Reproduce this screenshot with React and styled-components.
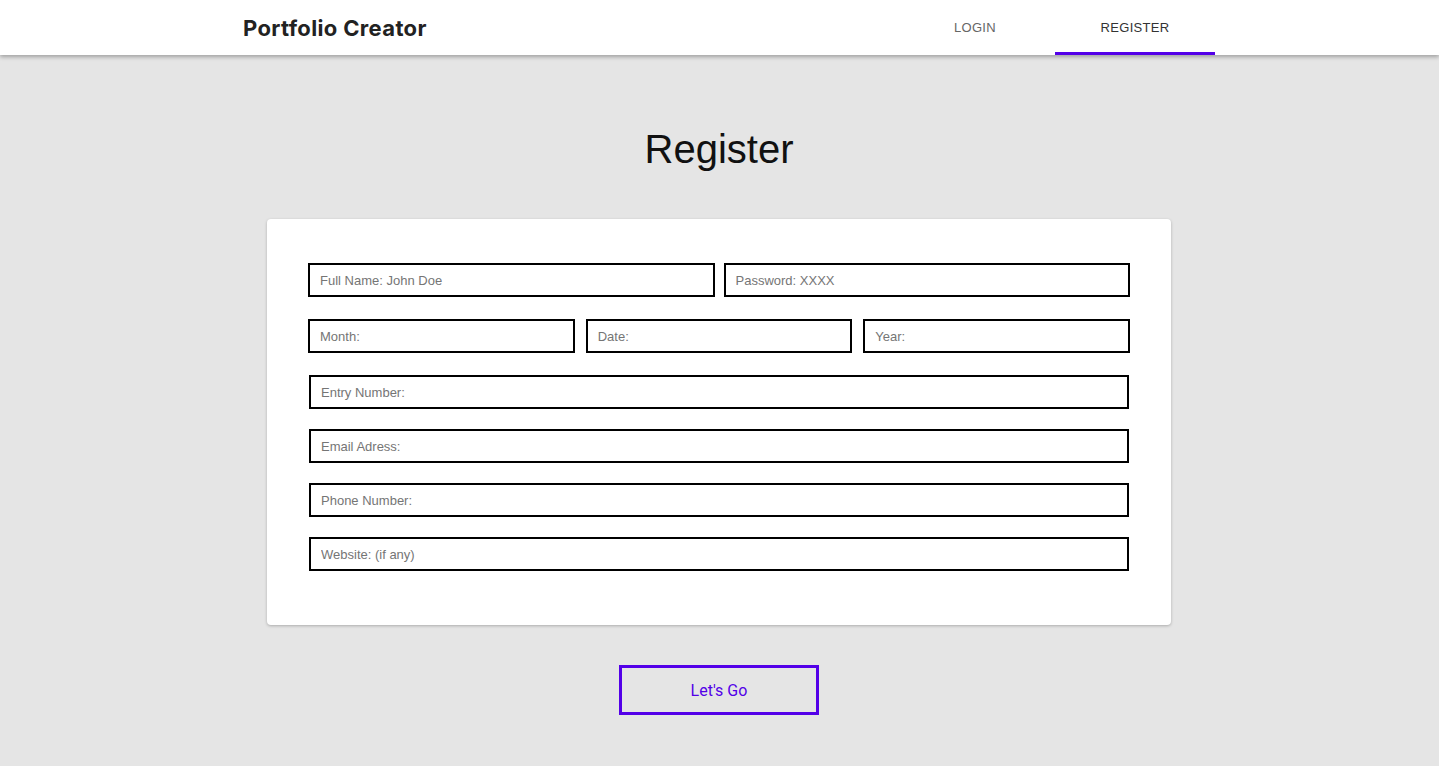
import React from "react";
import styled, { createGlobalStyle } from "styled-components";

const Global = createGlobalStyle`
  html, body { margin: 0; padding: 0; }
  body {
    background: #e5e5e5;
    font-family: "Liberation Sans", Arial, sans-serif;
    min-height: 766px;
  }
`;

const Page = styled.div`
  min-height: 766px;
  background: #e5e5e5;
`;

const Header = styled.header`
  height: 55px;
  background: #fff;
  box-shadow: 0 2px 4px rgba(0, 0, 0, 0.3);
  position: relative;
  z-index: 1;
`;

const HeaderInner = styled.div`
  width: 991px;
  margin: 0 auto;
  padding-left: 19px;
  height: 100%;
  display: flex;
  align-items: center;
  justify-content: space-between;
  box-sizing: border-box;
`;

const Brand = styled.div`
  font-family: Inter, "Liberation Sans", sans-serif;
  font-weight: 700;
  font-size: 22px;
  letter-spacing: 0.35px;
  color: #222;
  padding-top: 1px;
`;

const Tabs = styled.nav`
  display: flex;
  height: 100%;
`;

const Tab = styled.div`
  width: 160px;
  height: 100%;
  display: flex;
  align-items: center;
  justify-content: center;
  box-sizing: border-box;
  padding-top: 3px;
  font-size: 13px;
  letter-spacing: 0.3px;
  color: ${(p) => (p.$active ? "#333" : "#666")};
  border-bottom: 3px solid ${(p) => (p.$active ? "#5300e8" : "transparent")};
`;

const Main = styled.main`
  display: flex;
  flex-direction: column;
  align-items: center;
  padding-top: 71px;
  padding-right: 1px;
`;

const Title = styled.h1`
  margin: 0;
  font-weight: 400;
  font-size: 40px;
  line-height: 46px;
  color: #111;
`;

const Card = styled.form`
  margin-top: 47px;
  width: 904px;
  box-sizing: border-box;
  background: #fff;
  border-radius: 4px;
  box-shadow: 0 1px 3px rgba(0, 0, 0, 0.25);
  padding: 44px 41px 54px 41px;
  display: flex;
  flex-direction: column;
`;

const Row = styled.div`
  display: flex;
  gap: ${(p) => p.$gap || 9}px;
  margin-bottom: ${(p) => p.$mb ?? 22}px;
  padding: ${(p) => (p.$inset ? "0 1px 0 1px" : "0")};
`;

const Field = styled.input`
  flex: 1;
  min-width: 0;
  height: 34px;
  box-sizing: border-box;
  border: 2px solid #000;
  border-radius: 0;
  padding: 1px 10px 0;
  font-family: "Liberation Sans", Arial, sans-serif;
  font-size: 13px;
  color: #333;
  background: #fff;
  outline: none;
  &::placeholder { color: #757575; }
`;

const Button = styled.button`
  margin-top: 40px;
  width: 200px;
  height: 50px;
  box-sizing: border-box;
  background: transparent;
  border: 3px solid #5300e8;
  color: #5300e8;
  font-family: Roboto, "Liberation Sans", sans-serif;
  font-size: 16px;
  cursor: pointer;
`;

export default function App() {
  return (
    <Page>
      <Global />
      <Header>
        <HeaderInner>
          <Brand>Portfolio Creator</Brand>
          <Tabs>
            <Tab>LOGIN</Tab>
            <Tab $active>REGISTER</Tab>
          </Tabs>
        </HeaderInner>
      </Header>
      <Main>
        <Title>Register</Title>
        <Card onSubmit={(e) => e.preventDefault()}>
          <Row $gap={9}>
            <Field placeholder="Full Name: John Doe" />
            <Field placeholder="Password: XXXX" />
          </Row>
          <Row $gap={11}>
            <Field placeholder="Month:" />
            <Field placeholder="Date:" />
            <Field placeholder="Year:" />
          </Row>
          <Row $inset $mb={20}>
            <Field placeholder="Entry Number:" />
          </Row>
          <Row $inset $mb={20}>
            <Field placeholder="Email Adress:" />
          </Row>
          <Row $inset $mb={20}>
            <Field placeholder="Phone Number:" />
          </Row>
          <Row $inset $mb={0}>
            <Field placeholder="Website: (if any)" />
          </Row>
        </Card>
        <Button type="button">Let's Go</Button>
      </Main>
    </Page>
  );
}
